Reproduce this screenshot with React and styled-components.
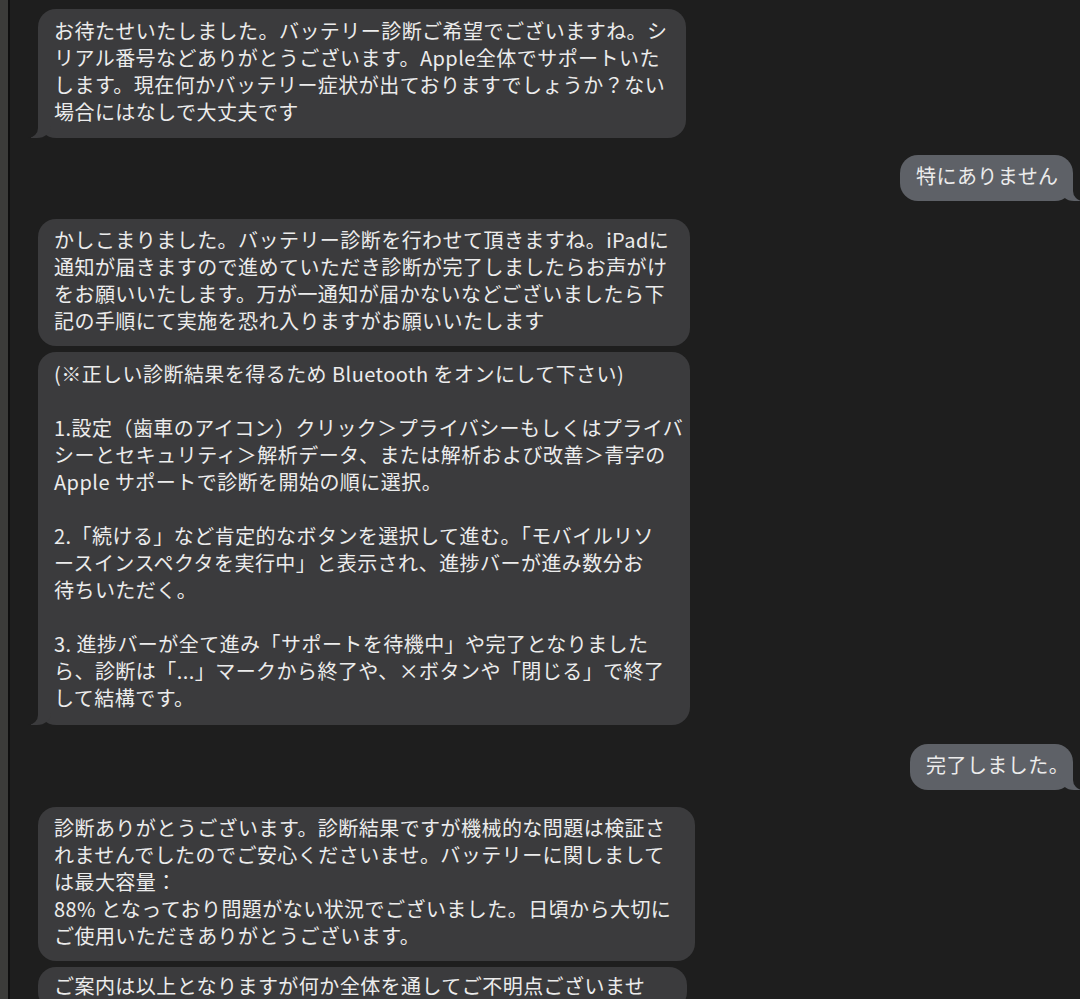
import styled, { createGlobalStyle } from "styled-components";

const GlobalStyle = createGlobalStyle`
    html, body {
        margin: 0;
        height: 999px;
        overflow: hidden;
        background: #1e1e1e;
    }
`;

const messages = [
    {
        from: "them",
        width: 648,
        tail: true,
        gap: 9,
        pad: 10.5,
        text: `お待たせいたしました。バッテリー診断ご希望でございますね。シ
リアル番号などありがとうございます。Apple全体でサポートいた
します。現在何かバッテリー症状が出ておりますでしょうか？ない
場合にはなしで大丈夫です`,
    },
    { from: "me", width: 173, tail: true, gap: 17, text: "特にありません" },
    {
        from: "them",
        width: 652,
        gap: 18,
        text: `かしこまりました。バッテリー診断を行わせて頂きますね。iPadに
通知が届きますので進めていただき診断が完了しましたらお声がけ
をお願いいたします。万が一通知が届かないなどございましたら下
記の手順にて実施を恐れ入りますがお願いいたします`,
    },
    {
        from: "them",
        width: 652,
        tail: true,
        gap: 6,
        pad: 11,
        text: `(※正しい診断結果を得るため Bluetooth をオンにして下さい)

1.設定（歯車のアイコン）クリック＞プライバシーもしくはプライバ
シーとセキュリティ＞解析データ、または解析および改善＞青字の
Apple サポートで診断を開始の順に選択。

2.「続ける」など肯定的なボタンを選択して進む。「モバイルリソ
ースインスペクタを実行中」と表示され、進捗バーが進み数分お
待ちいただく。

3. 進捗バーが全て進み「サポートを待機中」や完了となりました
ら、診断は「...」マークから終了や、×ボタンや「閉じる」で終了
して結構です。`,
    },
    { from: "me", width: 163, tail: true, gap: 19, text: "完了しました。" },
    {
        from: "them",
        width: 657,
        gap: 17,
        text: `診断ありがとうございます。診断結果ですが機械的な問題は検証さ
れませんでしたのでご安心くださいませ。バッテリーに関しまして
は最大容量：
88% となっており問題がない状況でございました。日頃から大切に
ご使用いただきありがとうございます。`,
    },
    {
        from: "them",
        width: 649,
        gap: 6,
        pad: 8,
        text: `ご案内は以上となりますが何か全体を通してご不明点ございませ`,
    },
];

export default function App() {
    return (
        <>
            <GlobalStyle />
            <Page>
                <Strip />
                <Divider />
                <Chat>
                    {messages.map((m, i) => (
                        <Row key={i} $mine={m.from === "me"} $gap={m.gap}>
                            <Bubble
                                $mine={m.from === "me"}
                                $tail={m.tail}
                                $width={m.width}
                                $pad={m.pad ?? 9.5}
                            >
                                {m.text.split("\n").map((line, j) => (
                                    <Line key={j}>{line}</Line>
                                ))}
                            </Bubble>
                        </Row>
                    ))}
                </Chat>
            </Page>
        </>
    );
}

const Page = styled.div`
    display: flex;
    height: 999px;
    overflow: hidden;
    background: #1e1e1e;
`;

const Strip = styled.div`
    width: 8px;
    flex: none;
    background: #3c3c3a;
`;

const Divider = styled.div`
    width: 2px;
    flex: none;
    background: #0f0f0f;
`;

const Chat = styled.div`
    flex: 1;
    display: flex;
    flex-direction: column;
    padding: 0 7px 0 28px;
`;

const Row = styled.div`
    display: flex;
    flex: none;
    justify-content: ${(p) => (p.$mine ? "flex-end" : "flex-start")};
    margin-top: ${(p) => p.$gap}px;
`;

const Bubble = styled.div`
    position: relative;
    box-sizing: border-box;
    width: ${(p) => p.$width}px;
    padding: ${(p) => p.$pad - 3}px 0 ${(p) => p.$pad + 3}px 16px;
    border-radius: 18px;
    background: ${(p) => (p.$mine ? "#5e6167" : "#3b3b3d")};
    color: #ececec;
    font-family: "Noto Sans CJK JP", "Noto Sans", sans-serif;
    font-size: 20px;
    letter-spacing: 0.45px;

    ${(p) =>
        p.$tail &&
        `
        &::before {
            content: "";
            position: absolute;
            bottom: 0;
            ${p.$mine ? "right" : "left"}: -7px;
            width: 20px;
            height: 18px;
            background: ${p.$mine ? "#5e6167" : "#3b3b3d"};
            ${p.$mine ? "border-bottom-left-radius" : "border-bottom-right-radius"}: 14px 12px;
        }
        &::after {
            content: "";
            position: absolute;
            bottom: 0;
            ${p.$mine ? "right" : "left"}: -20px;
            width: 20px;
            height: 18px;
            background: #1e1e1e;
            ${p.$mine ? "border-bottom-left-radius" : "border-bottom-right-radius"}: 10px;
        }
    `}
`;

const Line = styled.div`
    height: 27px;
    line-height: 27px;
    white-space: pre;
    overflow: visible;
`;
